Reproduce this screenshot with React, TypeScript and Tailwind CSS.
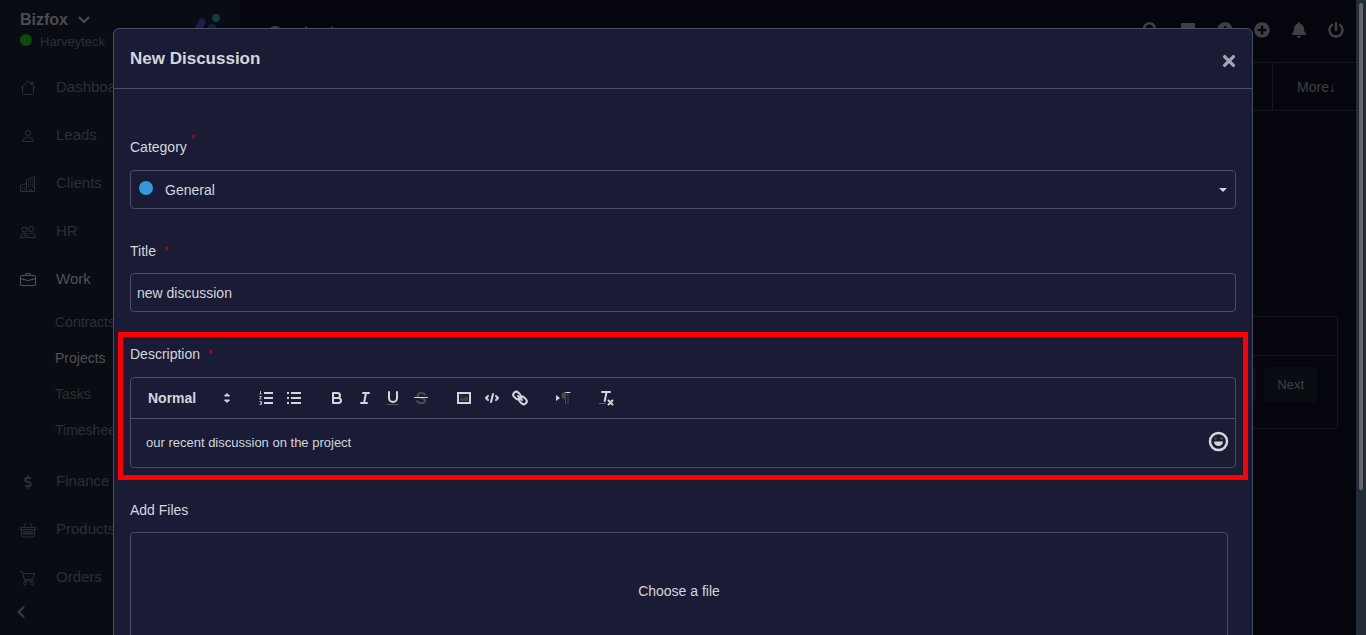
import type { ReactNode } from "react";
import { BsBriefcase, BsPeople, BsPerson } from "react-icons/bs";
import {
  FaBell,
  FaChevronLeft,
  FaDollarSign,
  FaExclamationCircle,
  FaPlusCircle,
  FaPowerOff,
  FaSearch,
  FaStickyNote,
  FaTimes,
} from "react-icons/fa";

type NavItem = { label: string; icon: ReactNode; active?: boolean };

const topNav: NavItem[] = [
  { label: "Dashboard", icon: <HouseIcon /> },
  { label: "Leads", icon: <BsPerson size={16} /> },
  { label: "Clients", icon: <BuildingIcon /> },
  { label: "HR", icon: <BsPeople size={16} /> },
  { label: "Work", icon: <BsBriefcase size={16} />, active: true },
];

const workNav = ["Contracts", "Projects", "Tasks", "Timesheet"];

const bottomNav: NavItem[] = [
  { label: "Finance", icon: <FaDollarSign size={14} /> },
  { label: "Products", icon: <BasketIcon /> },
  { label: "Orders", icon: <CartIcon /> },
];

function HouseIcon() {
  return (
    <svg width="16" height="16" viewBox="0 0 16 16" fill="none" stroke="currentColor">
      <path d="M.8 8.3 8 1.3l7.2 7M2.5 7v6.500a1 1 0 0 0 1 1h9a1 1 0 0 0 1-1V7M11.5 4.5v-2.500h1.5v4" />
    </svg>
  );
}

function BuildingIcon() {
  return (
    <svg width="16" height="16" viewBox="0 0 16 16" fill="none" stroke="currentColor">
      <path d="M.5 15.5v-6l6-2.2v8.2zM6.5 15.5V4.3l8-3.8v15zM9.5 15.5v-2h2v2" />
      <path d="M2 11.5h4M2 13.500h4M8 6.500h6M8 8.500h6M8 10.500h6M10 4.500h4" strokeDasharray="1 1" />
    </svg>
  );
}

function BasketIcon() {
  return (
    <svg width="16" height="16" viewBox="0 0 16 16" fill="none" stroke="currentColor">
      <path d="M3.5 5.5 6 1M12.5 5.5 10 1M.5 5.5h15v2H.5zM1.5 7.5v6a1.5 1.5 0 0 0 1.5 1.5h10a1.5 1.5 0 0 0 1.5-1.5v-6" />
      <path d="M3.5 9.5h9v3h-9z" fill="currentColor" opacity=".7" />
    </svg>
  );
}

function CartIcon() {
  return (
    <svg width="16" height="16" viewBox="0 0 16 16" fill="none" stroke="currentColor">
      <path d="M0 1.5h2.5l2 9.5h9M3 3.5h11.5l-1.3 5.2L4.2 10" />
      <circle cx="5" cy="13.5" r="1.5" />
      <circle cx="12" cy="13.5" r="1.5" />
    </svg>
  );
}

function BrandMark() {
  return (
    <svg width="32" height="32" viewBox="0 0 32 32">
      <path d="M12 8 6 20" stroke="#251a4b" strokeWidth="7" strokeLinecap="round" />
      <circle cx="22" cy="14" r="4" fill="#14233e" />
      <circle cx="26" cy="4" r="4" fill="#153b3c" />
    </svg>
  );
}

function NavRow({ item }: { item: NavItem }) {
  return (
    <a
      href="#"
      className={`flex h-12 items-center gap-5 pl-5 text-[15px] ${item.active ? "text-[#505152]" : "text-[#2c2f33]"}`}
    >
      <span className="flex w-4 justify-center pt-0.5">{item.icon}</span>
      {item.label}
    </a>
  );
}

function Sidebar() {
  return (
    <aside className="flex w-60 shrink-0 flex-col bg-[#090c13]">
      <div className="flex h-[63px] justify-between pl-5 pr-3 pt-2.5">
        <div>
          <div className="flex items-center gap-2.5 text-base leading-5 font-bold text-[#4b4c4e]">
            Bizfox
            <svg width="12" height="8" viewBox="0 0 12 8" fill="none" stroke="currentColor" strokeWidth="2">
              <path d="m1 1 5 5 5-5" />
            </svg>
          </div>
          <div className="flex items-center gap-2 text-[13px] leading-6 text-[#2c2f33]">
            <span className="mb-1 size-3 rounded-full bg-[#0f4a03]" />
            Harveyteck
          </div>
        </div>
        <div className="pr-1.5 pt-1">
          <BrandMark />
        </div>
      </div>

      <nav>
        {topNav.map((item) => (
          <NavRow key={item.label} item={item} />
        ))}
        <ul className="pt-px pb-[9px] pl-[55px] text-sm">
          {workNav.map((label) => (
            <li key={label}>
              <a
                href="#"
                className={`flex h-9 items-center ${label === "Projects" ? "text-[#505152]" : "text-[#2c2f33]"}`}
              >
                {label}
              </a>
            </li>
          ))}
        </ul>
        {bottomNav.map((item) => (
          <NavRow key={item.label} item={item} />
        ))}
      </nav>

      <button type="button" aria-label="Collapse menu" className="self-start pl-3.5 pt-1 text-[#37393c]">
        <FaChevronLeft size={14} />
      </button>
    </aside>
  );
}

function Page() {
  return (
    <main className="flex min-w-0 flex-1 flex-col bg-[#05060d] text-[#3f4042]">
      <header className="flex h-[63px] items-center justify-between border-b border-[#14161d] pl-7 pr-3">
        <h1 className="pt-1 text-lg font-bold">Contacts</h1>
        <div className="flex gap-[21px] pb-0.5">
          <button type="button" aria-label="Search"><FaSearch size={16} /></button>
          <button type="button" aria-label="Notes"><FaStickyNote size={16} /></button>
          <button type="button" aria-label="Alerts"><FaExclamationCircle size={16} /></button>
          <button type="button" aria-label="Add"><FaPlusCircle size={16} /></button>
          <button type="button" aria-label="Notifications"><FaBell size={16} /></button>
          <button type="button" aria-label="Log out"><FaPowerOff size={16} /></button>
        </div>
      </header>

      <div className="flex h-12 justify-end border-b border-[#14161d]">
        <a href="#" className="flex items-center border-l border-[#14161d] pl-6 pr-5 text-sm">
          More↓
        </a>
      </div>

      <section className="mx-[18px] mt-[205px] rounded border border-[#14161d]">
        <div className="h-[39px] border-b border-[#14161d]" />
        <div className="flex h-[72px] items-start justify-end gap-2 pr-5 pt-[11px] text-[13px]">
          <button type="button" className="h-[35px] rounded bg-[#090c13] px-[13px]">Previous</button>
          <button type="button" className="h-[35px] rounded bg-[#090c13] px-[13px]">Next</button>
        </div>
      </section>
    </main>
  );
}

function Label({ htmlFor, raised, children }: { htmlFor: string; raised?: boolean; children: ReactNode }) {
  return (
    <label htmlFor={htmlFor} className={`flex text-sm leading-5 ${raised ? "gap-1" : "gap-2"}`}>
      {children}
      <span className={`text-xs leading-5 text-[#d30010] ${raised ? "-mt-2" : ""}`}>*</span>
    </label>
  );
}

function Tool({ name, children }: { name: string; children: ReactNode }) {
  return (
    <button type="button" aria-label={name} className="flex h-6 w-7 items-center justify-center">
      <svg
        width="18"
        height="18"
        viewBox="0 0 18 18"
        fill="none"
        stroke="currentColor"
        strokeWidth="2"
        strokeLinecap="round"
        strokeLinejoin="round"
      >
        {children}
      </svg>
    </button>
  );
}

function Toolbar() {
  return (
    <div className="flex h-[41px] items-center border-b border-[#484c66] pl-[17px]">
      <div className="mr-[18px] flex w-[86px] items-center justify-between">
        <select aria-label="Text style" className="w-16 appearance-none bg-transparent text-sm font-bold">
          <option className="bg-[#191c34]">Normal</option>
        </select>
        <svg width="8" height="12" viewBox="0 0 8 12" fill="currentColor" className="mr-[3px]">
          <path d="M1.5 4 4 1.5 6.5 4zM1.5 8 4 10.5 6.5 8z" stroke="currentColor" strokeLinejoin="round" />
        </svg>
      </div>
      <div className="mr-[15px] flex">
        <Tool name="Ordered list">
          <path d="M7 4h9M7 9h9M7 14h9" strokeLinecap="butt" />
          <path
            d="M3.5 2v3M2.500 5h2M2.5 7.500h2L2.500 10h2M2.5 12.500h2v3h-2M3 14h1"
            strokeWidth="1"
            strokeLinecap="butt"
            opacity=".8"
          />
        </Tool>
        <Tool name="Bullet list">
          <path d="M6 4h10M6 9h10M6 14h10M2 4h2M2 9h2M2 14h2" strokeLinecap="butt" />
        </Tool>
      </div>
      <div className="mr-[15px] flex">
        <Tool name="Bold">
          <path d="M5 4h4.5a2.5 2.5 0 0 1 0 5H5zM5 9h5.5a2.5 2.5 0 0 1 0 5H5z" />
        </Tool>
        <Tool name="Italic">
          <path d="M7 4h6M5 14h6M10 4 8 14" />
        </Tool>
        <Tool name="Underline">
          <path d="M5 3v6a4 4 0 0 0 8 0V3" />
          <path d="M3.5 15.5h11" stroke="#55565c" strokeWidth="1" />
        </Tool>
        <Tool name="Strike">
          <path d="M13 5.5C12 3.5 5.5 3 5.5 6.5c0 3 7.5 2 7.5 5.2 0 3.300-6.500 3-8 .3" stroke="#4a4a4a" />
          <path d="M2.5 8.5h13" strokeWidth="1" />
        </Tool>
      </div>
      <div className="mr-[15px] flex">
        <Tool name="Image">
          <rect x="3" y="4" width="12" height="10" strokeLinejoin="miter" />
          <path d="M5 12v-2l2-2 1.500 1.500L11 7l2 2v3z" fill="#444" stroke="none" />
          <circle cx="6.5" cy="7" r="1" fill="#444" stroke="none" />
        </Tool>
        <Tool name="Code">
          <path d="M5 7 3 9l2 2M13 7l2 2-2 2M10 5 8 13" />
        </Tool>
        <Tool name="Link">
          <rect x="2" y="3.5" width="8" height="6" rx="3" transform="rotate(45 6 6.5)" />
          <rect x="8" y="8.5" width="8" height="6" rx="3" transform="rotate(45 12 11.5)" />
          <path d="m7 7 4 4" />
        </Tool>
      </div>
      <div className="mr-[15px] flex">
        <Tool name="Text direction">
          <path d="M2 6v6l4-3z" fill="currentColor" stroke="none" />
          <path d="M11 10a3.500 3.500 0 0 1 0-7zM11 3h1v12h-1zM13.500 3h1v12h-1z" fill="#4a4a4a" stroke="none" />
          <path d="M12 3.5h4" strokeWidth="1" />
        </Tool>
      </div>
      <Tool name="Clear formatting">
        <path d="M5 3h8M9.600 3 7.700 12" />
        <path d="m11.500 11.500 4 4M15.500 11.500l-4 4" />
        <path d="M2.500 14.500h6" stroke="#66676d" strokeWidth="1" />
      </Tool>
    </div>
  );
}

function DiscussionModal() {
  return (
    <div
      role="dialog"
      aria-label="New Discussion"
      className="mx-auto mt-7 w-full max-w-[1140px] rounded-t-md border border-[#484c66] bg-[#191c34] text-[#d5d6dc]"
    >
      <div className="flex h-[60px] items-center justify-between border-b border-[#484c66] px-4">
        <h2 className="text-[17px] font-bold">New Discussion</h2>
        <button type="button" aria-label="Close" className="pt-1 text-[#a3a4ae]">
          <FaTimes size={18} className="-mr-0.5" />
        </button>
      </div>

      <form className="flex flex-col px-4 pt-12">
        <Label htmlFor="category" raised>Category</Label>
        <div className="mt-[13px] mb-8 grid items-center">
          <select
            id="category"
            className="col-start-1 row-start-1 h-[39px] w-full appearance-none rounded border border-[#484c66] bg-[#191c34] pl-[34px] text-sm"
          >
            <option>General</option>
          </select>
          <span className="pointer-events-none col-start-1 row-start-1 mb-1 ml-[9px] size-3.5 rounded-full bg-[#3498db]" />
          <svg
            width="8"
            height="4"
            viewBox="0 0 8 4"
            fill="currentColor"
            className="pointer-events-none col-start-1 row-start-1 mr-[9px] justify-self-end"
          >
            <path d="M0 0h8L4 4z" />
          </svg>
        </div>

        <Label htmlFor="title">Title</Label>
        <input
          id="title"
          type="text"
          defaultValue="new discussion"
          className="mt-3 mb-8 h-[39px] rounded border border-[#484c66] bg-transparent px-1.5 text-sm"
        />

        <div className="relative mb-8">
          <Label htmlFor="description">Description</Label>
          <div className="mt-[13px] rounded border border-[#484c66]">
            <Toolbar />
            <div className="flex h-12 items-center pl-[15px] pr-1.5">
              <input
                id="description"
                type="text"
                defaultValue="our recent discussion on the project"
                className="min-w-0 flex-1 bg-transparent text-[13px] font-medium"
              />
              <button type="button" aria-label="Insert emoji" className="pb-1">
                <svg width="21" height="21" viewBox="0 0 21 21">
                  <circle cx="10.5" cy="10.5" r="8.5" fill="none" stroke="currentColor" strokeWidth="2.5" />
                  <path d="M6 10.5h9a4.500 4.500 0 0 1-9 0z" fill="currentColor" />
                  <circle cx="7.5" cy="7.5" r="1.3" fill="#4a4a4a" />
                  <circle cx="13.5" cy="7.5" r="1.3" fill="#4a4a4a" />
                </svg>
              </button>
            </div>
          </div>
          {/* highlight around the description field */}
          <div className="pointer-events-none absolute -inset-3 border-[5px] border-[#fe0000]" />
        </div>

        <label htmlFor="files" className="text-sm leading-5">Add Files</label>
        <label
          htmlFor="files"
          className="mt-3 mr-2 flex h-[118px] cursor-pointer items-center justify-center rounded border border-[#484c66] text-sm"
        >
          Choose a file
          <input id="files" type="file" className="sr-only" />
        </label>
      </form>
    </div>
  );
}

export default function App() {
  return (
    <div className="relative h-screen overflow-hidden font-['Liberation_Sans',Arial,sans-serif]">
      <div className="flex h-full">
        <Sidebar />
        <Page />
        <div className="w-2.5 shrink-0 bg-[#232c36] px-[3px] pt-[3px]">
          <div className="h-[77%] rounded-full bg-[#666]" />
        </div>
      </div>

      <div className="absolute inset-0 overflow-hidden">
        <DiscussionModal />
      </div>
    </div>
  );
}
